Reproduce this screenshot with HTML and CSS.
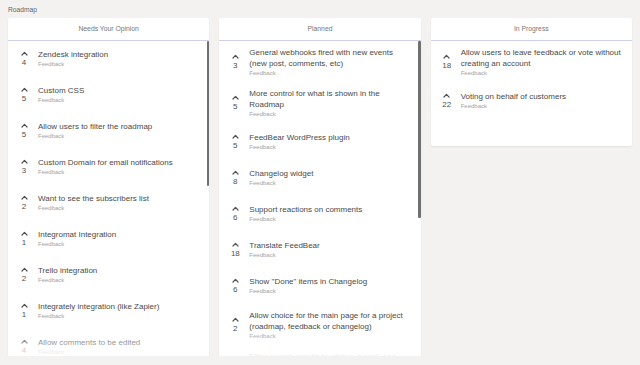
FILE: index.html
```html
<!DOCTYPE html>
<html lang="en">

<head>
    <meta charset="UTF-8">
    <meta name="viewport" content="width=device-width, initial-scale=1.0">
    <title>Roadmap</title>
    <link rel="stylesheet" href="styles.css">
</head>

<body>
    <div class="page">
        <div class="page-title">Roadmap</div>
        <div class="board">

            <!-- Needs Your Opinion -->
            <div class="column">
                <div class="column-head">Needs Your Opinion</div>
                <div class="column-body tall">
                    <div class="item">
                        <div class="vote"><svg class="arrow" viewBox="0 0 7 5"><path d="M1 4 L3.5 1.4 L6 4"/></svg><span>4</span></div>
                        <div class="text"><div class="title">Zendesk integration</div><div class="tag">Feedback</div></div>
                    </div>
                    <div class="item">
                        <div class="vote"><svg class="arrow" viewBox="0 0 7 5"><path d="M1 4 L3.5 1.4 L6 4"/></svg><span>5</span></div>
                        <div class="text"><div class="title">Custom CSS</div><div class="tag">Feedback</div></div>
                    </div>
                    <div class="item">
                        <div class="vote"><svg class="arrow" viewBox="0 0 7 5"><path d="M1 4 L3.5 1.4 L6 4"/></svg><span>5</span></div>
                        <div class="text"><div class="title">Allow users to filter the roadmap</div><div class="tag">Feedback</div></div>
                    </div>
                    <div class="item">
                        <div class="vote"><svg class="arrow" viewBox="0 0 7 5"><path d="M1 4 L3.5 1.4 L6 4"/></svg><span>3</span></div>
                        <div class="text"><div class="title">Custom Domain for email notifications</div><div class="tag">Feedback</div></div>
                    </div>
                    <div class="item">
                        <div class="vote"><svg class="arrow" viewBox="0 0 7 5"><path d="M1 4 L3.5 1.4 L6 4"/></svg><span>2</span></div>
                        <div class="text"><div class="title">Want to see the subscribers list</div><div class="tag">Feedback</div></div>
                    </div>
                    <div class="item">
                        <div class="vote"><svg class="arrow" viewBox="0 0 7 5"><path d="M1 4 L3.5 1.4 L6 4"/></svg><span>1</span></div>
                        <div class="text"><div class="title">Integromat Integration</div><div class="tag">Feedback</div></div>
                    </div>
                    <div class="item">
                        <div class="vote"><svg class="arrow" viewBox="0 0 7 5"><path d="M1 4 L3.5 1.4 L6 4"/></svg><span>2</span></div>
                        <div class="text"><div class="title">Trello integration</div><div class="tag">Feedback</div></div>
                    </div>
                    <div class="item">
                        <div class="vote"><svg class="arrow" viewBox="0 0 7 5"><path d="M1 4 L3.5 1.4 L6 4"/></svg><span>1</span></div>
                        <div class="text"><div class="title">Integrately integration (like Zapier)</div><div class="tag">Feedback</div></div>
                    </div>
                    <div class="item">
                        <div class="vote"><svg class="arrow" viewBox="0 0 7 5"><path d="M1 4 L3.5 1.4 L6 4"/></svg><span>4</span></div>
                        <div class="text"><div class="title">Allow comments to be edited</div><div class="tag">Feedback</div></div>
                    </div>
                    <div class="scroll-thumb thumb-a"></div>
                </div>
            </div>

            <!-- Planned -->
            <div class="column">
                <div class="column-head">Planned</div>
                <div class="column-body tall">
                    <div class="item">
                        <div class="vote"><svg class="arrow" viewBox="0 0 7 5"><path d="M1 4 L3.5 1.4 L6 4"/></svg><span>3</span></div>
                        <div class="text"><div class="title">General webhooks fired with new events (new post, comments, etc)</div><div class="tag">Feedback</div></div>
                    </div>
                    <div class="item">
                        <div class="vote"><svg class="arrow" viewBox="0 0 7 5"><path d="M1 4 L3.5 1.4 L6 4"/></svg><span>5</span></div>
                        <div class="text"><div class="title">More control for what is shown in the Roadmap</div><div class="tag">Feedback</div></div>
                    </div>
                    <div class="item">
                        <div class="vote"><svg class="arrow" viewBox="0 0 7 5"><path d="M1 4 L3.5 1.4 L6 4"/></svg><span>5</span></div>
                        <div class="text"><div class="title">FeedBear WordPress plugin</div><div class="tag">Feedback</div></div>
                    </div>
                    <div class="item">
                        <div class="vote"><svg class="arrow" viewBox="0 0 7 5"><path d="M1 4 L3.5 1.4 L6 4"/></svg><span>8</span></div>
                        <div class="text"><div class="title">Changelog widget</div><div class="tag">Feedback</div></div>
                    </div>
                    <div class="item">
                        <div class="vote"><svg class="arrow" viewBox="0 0 7 5"><path d="M1 4 L3.5 1.4 L6 4"/></svg><span>6</span></div>
                        <div class="text"><div class="title">Support reactions on comments</div><div class="tag">Feedback</div></div>
                    </div>
                    <div class="item">
                        <div class="vote"><svg class="arrow" viewBox="0 0 7 5"><path d="M1 4 L3.5 1.4 L6 4"/></svg><span>18</span></div>
                        <div class="text"><div class="title">Translate FeedBear</div><div class="tag">Feedback</div></div>
                    </div>
                    <div class="item">
                        <div class="vote"><svg class="arrow" viewBox="0 0 7 5"><path d="M1 4 L3.5 1.4 L6 4"/></svg><span>6</span></div>
                        <div class="text"><div class="title">Show "Done" items in Changelog</div><div class="tag">Feedback</div></div>
                    </div>
                    <div class="item">
                        <div class="vote"><svg class="arrow" viewBox="0 0 7 5"><path d="M1 4 L3.5 1.4 L6 4"/></svg><span>2</span></div>
                        <div class="text"><div class="title">Allow choice for the main page for a project (roadmap, feedback or changelog)</div><div class="tag">Feedback</div></div>
                    </div>
                    <div class="item">
                        <div class="vote"><svg class="arrow" viewBox="0 0 7 5"><path d="M1 4 L3.5 1.4 L6 4"/></svg><span>3</span></div>
                        <div class="text"><div class="title">Filter search results by status, board, and tags</div><div class="tag">Feedback</div></div>
                    </div>
                    <div class="scroll-thumb thumb-b"></div>
                </div>
            </div>

            <!-- In Progress -->
            <div class="column">
                <div class="column-head">In Progress</div>
                <div class="column-body short">
                    <div class="item">
                        <div class="vote"><svg class="arrow" viewBox="0 0 7 5"><path d="M1 4 L3.5 1.4 L6 4"/></svg><span>18</span></div>
                        <div class="text"><div class="title">Allow users to leave feedback or vote without creating an account</div><div class="tag">Feedback</div></div>
                    </div>
                    <div class="item">
                        <div class="vote"><svg class="arrow" viewBox="0 0 7 5"><path d="M1 4 L3.5 1.4 L6 4"/></svg><span>22</span></div>
                        <div class="text"><div class="title">Voting on behalf of customers</div><div class="tag">Feedback</div></div>
                    </div>
                </div>
            </div>

        </div>
    </div>
</body>

</html>
```

FILE: styles.css
```css
body {
    margin: 0;
    background: #f3f2f0;
    font-family: 'Liberation Sans', Arial, sans-serif;
    color: #4a4a4a;
}

.page {
    padding: 6px 8px 0 8px;
}

.page-title {
    font-size: 6.7px;
    line-height: 8px;
    color: #666;
}

.board {
    display: grid;
    grid-template-columns: repeat(3, 1fr);
    gap: 10px;
    margin-top: 4px;
    align-items: start;
}

.column {
    background: #fff;
    border-radius: 2px;
    box-shadow: 0 1px 2px rgba(0, 0, 0, 0.07);
}

.column-head {
    height: 22px;
    line-height: 22px;
    text-align: center;
    font-size: 6.8px;
    color: #777;
    border-bottom: 1px solid #cdd0ea;
}

.column-body {
    position: relative;
    overflow: hidden;
    padding: 0 2px 0 10px;
}

/* scrolling lists lose some width to the scrollbar */
.column-body.tall {
    height: 315px;
    padding-right: 10px;
}

/* fade out the list at the bottom edge */
.column-body.tall::after {
    content: '';
    position: absolute;
    left: 0;
    right: 0;
    bottom: 0;
    height: 24px;
    background: linear-gradient(to bottom, rgba(255, 255, 255, 0), rgba(255, 255, 255, 0.92));
}

.column-body.short {
    min-height: 105px;
}

.scroll-thumb {
    position: absolute;
    top: 0;
    right: 0;
    width: 2.5px;
    background: #707070;
    border-radius: 1px;
}

.thumb-a {
    height: 145px;
}

.thumb-b {
    height: 177px;
}

.item {
    display: flex;
    align-items: center;
    gap: 8px;
    padding: 5.5px 0;
    min-height: 25px;
}

.vote {
    width: 12px;
    flex-shrink: 0;
    display: flex;
    flex-direction: column;
    align-items: center;
    font-size: 8px;
    line-height: 9px;
    color: #505050;
}

.arrow {
    width: 7px;
    height: 5px;
    margin-bottom: 2px;
    fill: none;
    stroke: #505050;
    stroke-width: 1.2;
    stroke-linecap: round;
    stroke-linejoin: round;
}

.title {
    font-size: 8px;
    line-height: 11px;
    color: #4a4a4a;
}

.tag {
    font-size: 6px;
    line-height: 8.5px;
    color: #a3a3a3;
}
```
